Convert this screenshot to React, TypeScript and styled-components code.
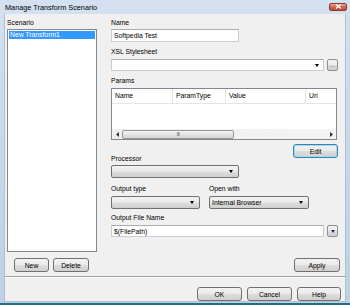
import React from 'react';
import styled, { createGlobalStyle, css } from 'styled-components';

const GlobalStyle = createGlobalStyle`
  html, body { margin: 0; padding: 0; background: #ffffff; }
  body { font-family: "Liberation Sans", Arial, sans-serif; color: #000; }
  * { box-sizing: border-box; }
`;

const Window = styled.div`
  width: 350px;
  height: 305px;
  background: linear-gradient(#d3e1f0, #bdd0e6);
  display: flex;
  flex-direction: column;
  border-bottom: 2px solid #1f6f84;
  overflow: hidden;
`;

const TitleBar = styled.div`
  height: 14px;
  flex: none;
  display: flex;
  align-items: center;
  justify-content: space-between;
  padding: 0 3px 0 5px;
  font-size: 7.3px;
`;

const CloseButton = styled.div`
  width: 18px;
  height: 8px;
  margin-top: -1px;
  border: 1px solid #8a3a30;
  border-radius: 2px;
  background: linear-gradient(#e9a497, #cf6452 50%, #c24a36);
  display: flex;
  align-items: center;
  justify-content: center;
`;

const Client = styled.div`
  flex: 1;
  margin: 0 4px 1px 4px;
  background: #f0f0f0;
  border: 1px solid #aebfd3;
  border-top: none;
  display: flex;
  flex-direction: column;
`;

const Main = styled.div`
  display: flex;
  padding: 4px 5px 0 2px;
`;

const LeftCol = styled.div`
  width: 90px;
  flex: none;
  display: flex;
  flex-direction: column;
`;

const RightCol = styled.div`
  width: 229px;
  margin-left: 14px;
  display: flex;
  flex-direction: column;
  align-items: flex-start;
`;

const Label = styled.div<{ $mt?: number }>`
  font-size: 6.8px;
  line-height: 10px;
  height: 10px;
  white-space: nowrap;
  margin-top: ${(p) => p.$mt ?? 0}px;
`;

const ListBox = styled.div`
  margin-top: 1px;
  height: 223px;
  border: 1px solid #828790;
  background: #ffffff;
  padding: 1px;
`;

const ListItem = styled.div<{ $selected?: boolean }>`
  height: 8px;
  line-height: 8px;
  font-size: 6.8px;
  padding-left: 1px;
  ${(p) =>
    p.$selected &&
    css`
      background: #3399ff;
      color: #ffffff;
    `}
`;

const ButtonRow = styled.div<{ $mt: number; $pl?: number; $gap?: number }>`
  display: flex;
  gap: ${(p) => p.$gap ?? 4}px;
  margin-top: ${(p) => p.$mt}px;
  padding-left: ${(p) => p.$pl ?? 0}px;
`;

const Button = styled.div<{ $w: number; $focused?: boolean }>`
  width: ${(p) => p.$w}px;
  height: 14px;
  flex: none;
  border: 1px solid #707070;
  border-radius: 3px;
  background: linear-gradient(#f2f2f2 0%, #ebebeb 48%, #dddddd 52%, #cfcfcf 100%);
  font-size: 6.8px;
  display: flex;
  align-items: center;
  justify-content: center;
  ${(p) =>
    p.$focused &&
    css`
      border-color: #3c7fb1;
      box-shadow: inset 0 0 0 1px #9fdcf3;
    `}
`;

const TextInput = styled.div<{ $w: number; $h?: number; $mt?: number }>`
  width: ${(p) => p.$w}px;
  height: ${(p) => p.$h ?? 13}px;
  margin-top: ${(p) => p.$mt ?? 0}px;
  flex: none;
  background: #ffffff;
  border: 1px solid #c9ced6;
  border-top-color: #abadb3;
  font-size: 6.8px;
  display: flex;
  align-items: center;
  padding-left: 2px;
`;

const FieldRow = styled.div<{ $mt?: number; $gap?: number }>`
  display: flex;
  align-items: flex-start;
  gap: ${(p) => p.$gap ?? 3}px;
  margin-top: ${(p) => p.$mt ?? 0}px;
`;

const EditCombo = styled.div<{ $w: number }>`
  width: ${(p) => p.$w}px;
  height: 12px;
  background: #ffffff;
  border: 1px solid #c9ced6;
  border-top-color: #abadb3;
  display: flex;
  align-items: center;
  justify-content: flex-end;
  padding-right: 4px;
`;

const Combo = styled.div<{ $w: number }>`
  width: ${(p) => p.$w}px;
  height: 13px;
  flex: none;
  border: 1px solid #707070;
  border-radius: 2px;
  background: linear-gradient(#f2f2f2 0%, #ebebeb 48%, #dddddd 52%, #cfcfcf 100%);
  display: flex;
  align-items: center;
  justify-content: space-between;
  padding: 0 5px 0 2px;
  font-size: 6.8px;
`;

const Arrow = styled.span<{ $color?: string }>`
  width: 0;
  height: 0;
  border-left: 2.5px solid transparent;
  border-right: 2.5px solid transparent;
  border-top: 3px solid ${(p) => p.$color ?? '#000'};
`;

const SmallButton = styled.div`
  width: 11px;
  height: 12px;
  flex: none;
  border: 1px solid #8e8f8f;
  border-radius: 2px;
  background: linear-gradient(#f2f2f2 0%, #ebebeb 48%, #dddddd 52%, #cfcfcf 100%);
  display: flex;
  align-items: center;
  justify-content: center;
  font-size: 6px;
  line-height: 6px;
  color: #333;
`;

const Table = styled.div`
  width: 226px;
  height: 52px;
  margin-top: 2px;
  border: 1px solid #828790;
  background: #ffffff;
  display: flex;
  flex-direction: column;
  overflow: hidden;
`;

const HeaderRow = styled.div`
  display: flex;
  height: 15px;
  flex: none;
  border-bottom: 1px solid #e5e5e5;
`;

const HeaderCell = styled.div<{ $w: number }>`
  width: ${(p) => p.$w}px;
  flex: none;
  padding-left: 3px;
  border-right: 1px solid #e3e3e3;
  font-size: 6.8px;
  line-height: 14px;
  white-space: nowrap;
`;

const TableBody = styled.div`
  flex: 1;
`;

const ScrollBar = styled.div`
  height: 10px;
  flex: none;
  display: flex;
  align-items: center;
  background: linear-gradient(90deg, #eeeeee, #f4f4f4);
`;

const ScrollArrow = styled.div`
  width: 10px;
  height: 10px;
  flex: none;
  display: flex;
  align-items: center;
  justify-content: center;
`;

const Thumb = styled.div`
  width: 112px;
  height: 9px;
  border: 1px solid #979797;
  border-radius: 2px;
  background: linear-gradient(#f3f3f3, #e2e2e2 50%, #d6d6d6);
  display: flex;
  align-items: center;
  justify-content: center;
  font-size: 5px;
  letter-spacing: -0.5px;
  color: #555;
`;

const TrackSpacer = styled.div`
  flex: 1;
`;

const EditRow = styled.div`
  width: 227px;
  height: 20px;
  margin-top: 4px;
  display: flex;
  justify-content: space-between;
`;

const BottomLabel = styled(Label)`
  align-self: flex-end;
`;

const ApplyRow = styled.div`
  width: 229px;
  display: flex;
  justify-content: flex-end;
  margin-top: 21px;
`;

const Separator = styled.div`
  margin-top: 4px;
  height: 2px;
  border-top: 1px solid #a0a0a0;
  border-bottom: 1px solid #ffffff;
`;

const Footer = styled.div`
  display: flex;
  justify-content: flex-end;
  gap: 5px;
  padding: 9px 4px 0 0;
`;

const Col = styled.div`
  display: flex;
  flex-direction: column;
`;

const TriLeft = () => (
  <svg width="3" height="5" viewBox="0 0 3 5">
    <path d="M3 0 L0 2.5 L3 5 Z" fill="#333" />
  </svg>
);
const TriRight = () => (
  <svg width="3" height="5" viewBox="0 0 3 5">
    <path d="M0 0 L3 2.5 L0 5 Z" fill="#333" />
  </svg>
);

export default function App() {
  return (
    <>
      <GlobalStyle />
      <Window>
        <TitleBar>
          <span>Manage Transform Scenario</span>
          <CloseButton>
            <svg width="7" height="5" viewBox="0 0 7 5">
              <path d="M1 0.5 L6 4.5 M6 0.5 L1 4.5" stroke="#fff" strokeWidth="1.3" />
            </svg>
          </CloseButton>
        </TitleBar>
        <Client>
          <Main>
            <LeftCol>
              <Label>Scenario</Label>
              <ListBox>
                <ListItem $selected>New Transform1</ListItem>
              </ListBox>
              <ButtonRow $mt={6} $pl={7}>
                <Button $w={35}>New</Button>
                <Button $w={36}>Delete</Button>
              </ButtonRow>
            </LeftCol>
            <RightCol>
              <Label>Name</Label>
              <TextInput $w={128} $mt={1}>Softpedia Test</TextInput>
              <Label $mt={5}>XSL Stylesheet</Label>
              <FieldRow $mt={2}>
                <EditCombo $w={213}>
                  <Arrow />
                </EditCombo>
                <SmallButton>...</SmallButton>
              </FieldRow>
              <Label $mt={5}>Params</Label>
              <Table>
                <HeaderRow>
                  <HeaderCell $w={61}>Name</HeaderCell>
                  <HeaderCell $w={53}>ParamType</HeaderCell>
                  <HeaderCell $w={80}>Value</HeaderCell>
                  <HeaderCell $w={40}>Uri</HeaderCell>
                </HeaderRow>
                <TableBody />
                <ScrollBar>
                  <ScrollArrow>
                    <TriLeft />
                  </ScrollArrow>
                  <Thumb>III</Thumb>
                  <TrackSpacer />
                  <ScrollArrow>
                    <TriRight />
                  </ScrollArrow>
                </ScrollBar>
              </Table>
              <EditRow>
                <BottomLabel>Processor</BottomLabel>
                <Button $w={45} $focused>
                  Edit
                </Button>
              </EditRow>
              <FieldRow $mt={1}>
                <Combo $w={128}>
                  <span />
                  <Arrow />
                </Combo>
              </FieldRow>
              <FieldRow $mt={6} $gap={9}>
                <Col>
                  <Label>Output type</Label>
                  <Combo $w={89} style={{ marginTop: 2 }}>
                    <span />
                    <Arrow />
                  </Combo>
                </Col>
                <Col>
                  <Label>Open with</Label>
                  <Combo $w={100} style={{ marginTop: 2 }}>
                    <span>Internal Browser</span>
                    <Arrow />
                  </Combo>
                </Col>
              </FieldRow>
              <Label $mt={4}>Output File Name</Label>
              <FieldRow $mt={2}>
                <TextInput $w={213} $h={12}>$(FilePath)</TextInput>
                <SmallButton>
                  <Arrow $color="#1c2c7c" />
                </SmallButton>
              </FieldRow>
              <ApplyRow>
                <Button $w={46}>Apply</Button>
              </ApplyRow>
            </RightCol>
          </Main>
          <Separator />
          <Footer>
            <Button $w={45}>OK</Button>
            <Button $w={45}>Cancel</Button>
            <Button $w={44}>Help</Button>
          </Footer>
        </Client>
      </Window>
    </>
  );
}
